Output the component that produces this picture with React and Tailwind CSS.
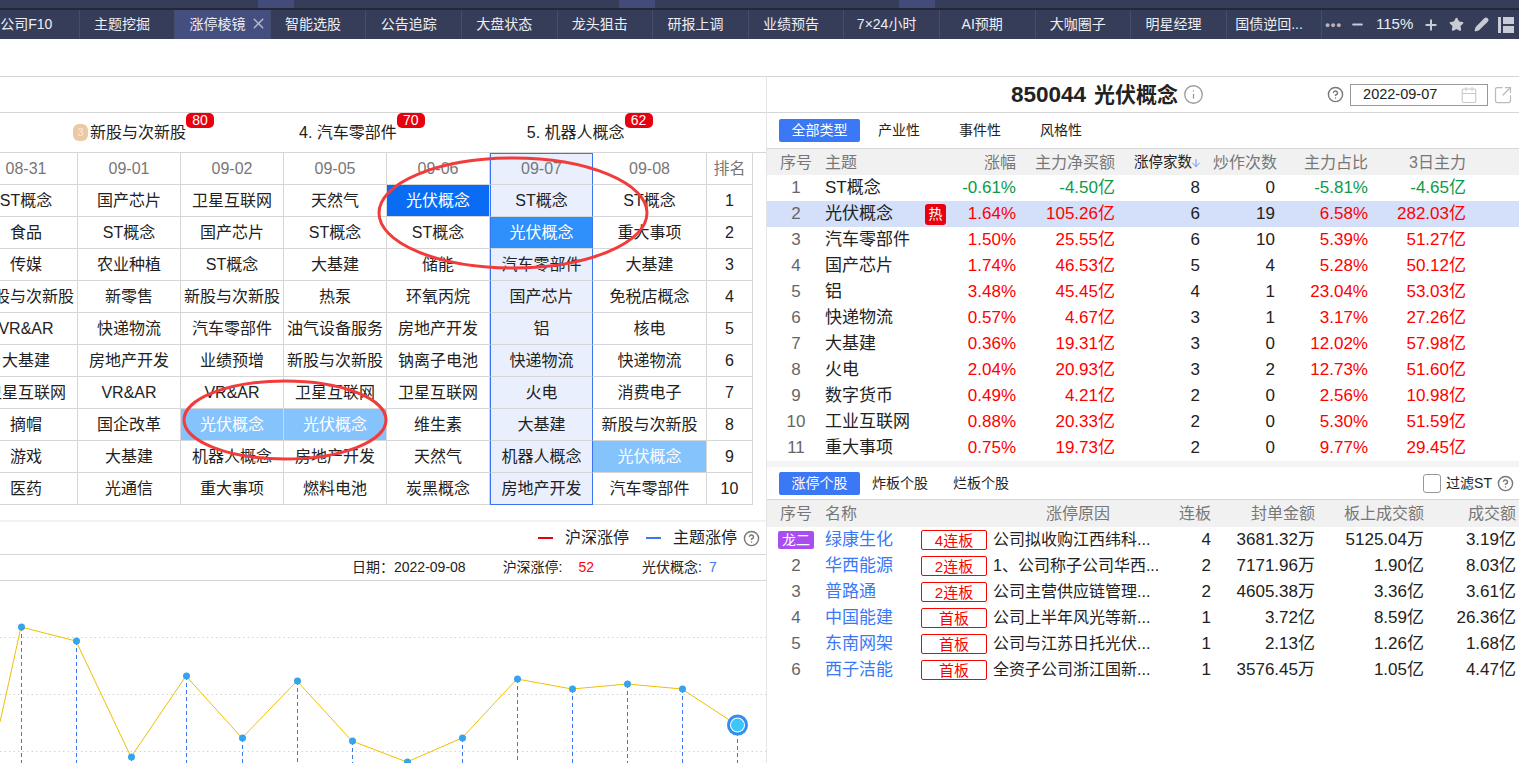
import React from 'react';
import { CircleHelp, Info, Calendar, Minus, Plus, Star, Pencil, ArrowDown, SquareArrowOutUpRight, X } from 'lucide-react';

const tabs = ['公司F10', '主题挖掘', '涨停棱镜', '智能选股', '公告追踪', '大盘状态', '龙头狙击', '研报上调', '业绩预告', '7×24小时', 'AI预期', '大咖圈子', '明星经理', '国债逆回...'];

const dates = ['08-31', '09-01', '09-02', '09-05', '09-06', '09-07', '09-08', '排名'];

const rank = [
  ['ST概念', '国产芯片', '卫星互联网', '天然气', '光伏概念', 'ST概念', 'ST概念'],
  ['食品', 'ST概念', '国产芯片', 'ST概念', 'ST概念', '光伏概念', '重大事项'],
  ['传媒', '农业种植', 'ST概念', '大基建', '储能', '汽车零部件', '大基建'],
  ['新股与次新股', '新零售', '新股与次新股', '热泵', '环氧丙烷', '国产芯片', '免税店概念'],
  ['VR&AR', '快递物流', '汽车零部件', '油气设备服务', '房地产开发', '铝', '核电'],
  ['大基建', '房地产开发', '业绩预增', '新股与次新股', '钠离子电池', '快递物流', '快递物流'],
  ['卫星互联网', 'VR&AR', 'VR&AR', '卫星互联网', '卫星互联网', '火电', '消费电子'],
  ['摘帽', '国企改革', '光伏概念', '光伏概念', '维生素', '大基建', '新股与次新股'],
  ['游戏', '大基建', '机器人概念', '房地产开发', '天然气', '机器人概念', '光伏概念'],
  ['医药', '光通信', '重大事项', '燃料电池', '炭黑概念', '房地产开发', '汽车零部件'],
];

const themes = [
  ['ST概念', '-0.61%', '-4.50亿', 8, 0, '-5.81%', '-4.65亿'],
  ['光伏概念', '1.64%', '105.26亿', 6, 19, '6.58%', '282.03亿'],
  ['汽车零部件', '1.50%', '25.55亿', 6, 10, '5.39%', '51.27亿'],
  ['国产芯片', '1.74%', '46.53亿', 5, 4, '5.28%', '50.12亿'],
  ['铝', '3.48%', '45.45亿', 4, 1, '23.04%', '53.03亿'],
  ['快递物流', '0.57%', '4.67亿', 3, 1, '3.17%', '27.26亿'],
  ['大基建', '0.36%', '19.31亿', 3, 0, '12.02%', '57.98亿'],
  ['火电', '2.04%', '20.93亿', 3, 2, '12.73%', '51.60亿'],
  ['数字货币', '0.49%', '4.21亿', 2, 0, '2.56%', '10.98亿'],
  ['工业互联网', '0.88%', '20.33亿', 2, 0, '5.30%', '51.59亿'],
  ['重大事项', '0.75%', '19.73亿', 2, 0, '9.77%', '29.45亿'],
];

const stocks = [
  ['绿康生化', '4连板', '公司拟收购江西纬科...', 4, '3681.32万', '5125.04万', '3.19亿'],
  ['华西能源', '2连板', '1、公司称子公司华西...', 2, '7171.96万', '1.90亿', '8.03亿'],
  ['普路通', '2连板', '公司主营供应链管理...', 2, '4605.38万', '3.36亿', '3.61亿'],
  ['中国能建', '首板', '公司上半年风光等新...', 1, '3.72亿', '8.59亿', '26.36亿'],
  ['东南网架', '首板', '公司与江苏日托光伏...', 1, '2.13亿', '1.26亿', '1.68亿'],
  ['西子洁能', '首板', '全资子公司浙江国新...', 1, '3576.45万', '1.05亿', '4.47亿'],
];

const points = [[21, 47], [76, 61], [131, 177], [186, 96], [242, 158], [297, 101], [352, 161], [407, 182], [462, 158], [517, 99], [572, 109], [627, 104], [682, 109]];

const themeCols = 'grid grid-cols-[58px_121px_70px_99px_85px_75px_93px_98px]';
const stockCols = 'grid grid-cols-[58px_96px_72px_168px_50px_104px_109px_92px]';

// 每个单元格的底色：选中列、当日光伏概念
const cellClass = (text, col) => {
  if (text !== '光伏概念') return col === 5 ? 'bg-[#e9effd] text-[#222]' : 'text-[#222]';
  if (col === 4) return 'bg-[#0a6cf5] text-white';
  if (col === 5) return 'bg-[#2f8ffb] text-white';
  return 'bg-[#85c3fd] text-white';
};

const Badge = ({ value }) => (
  <span className="absolute left-full top-[-8px] h-[15px] w-[28px] rounded-[5px] bg-[#e8000f] text-center text-[14px] leading-[15px] text-white">{value}</span>
);

const LayoutIcon = () => (
  <svg width="16" height="18" viewBox="0 0 16 18" fill="#c9cbd6">
    <rect x="0" y="1" width="3" height="16" />
    <rect x="5" y="1" width="11" height="7" />
    <rect x="5" y="10" width="11" height="7" />
  </svg>
);

const TopBar = () => (
  <div className="bg-[#363d59]">
    <div className="flex h-[8px]">
      <div className="ml-[258px] w-[36px] bg-[#434c78]" />
      <div className="ml-[325px] w-[36px] bg-[#434c78]" />
      <div className="ml-[244px] w-[36px] bg-[#434c78]" />
    </div>
    <div className="h-[2px] bg-[#232738]" />
    <div className="flex h-[29px] items-center text-[14px] text-[#eceef5]">
      <div className="ml-[-16px] flex h-full">
        {tabs.map((tab, i) => (
          <div key={tab} className={`relative flex h-full w-[95.6px] shrink-0 items-center justify-center border-r border-[#454d6e] pr-[10px] ${i === 2 ? 'bg-[#444f80]' : ''}`}>
            <span>{tab}</span>
            {i === 2 && <X size={17} className="absolute right-[3px] top-[5px] text-[#b5bad0]" />}
          </div>
        ))}
      </div>
      <div className="flex items-center pl-[3px]">
        <span className="text-[13px] font-bold tracking-[1px] text-[#b4b7c4]">•••</span>
        <Minus size={15} strokeWidth={3} className="ml-[8px] text-[#c9cbd6]" />
        <span className="ml-[11px] text-[15px]">115%</span>
        <Plus size={16} strokeWidth={3} className="ml-[10px] text-[#c9cbd6]" />
        <Star size={15} fill="#c9cbd6" className="ml-[10px] text-[#c9cbd6]" />
        <Pencil size={15} fill="#c9cbd6" className="ml-[10px] text-[#c9cbd6]" />
        <span className="ml-[9px]"><LayoutIcon /></span>
      </div>
    </div>
  </div>
);

const Podium = () => (
  <div className="flex h-[41px] items-center border-y border-[#d6d6d6] pl-[73px] text-[16px] text-[#222]">
    <span className="mr-[2px] flex h-[17px] w-[15px] items-center justify-center rounded-[6px] bg-[#ebc9a4] text-[11px] leading-none text-[#f8ecdf]">3</span>
    <span className="relative">新股与次新股<Badge value="80" /></span>
    <span className="relative ml-[113px]">4. 汽车零部件<Badge value="70" /></span>
    <span className="relative ml-[130px]">5. 机器人概念<Badge value="62" /></span>
  </div>
);

const RankTable = () => (
  <div className="ml-[-25px] grid w-[778px] grid-cols-[103px_103px_103px_103px_103px_103px_114px_46px] text-center text-[16px] leading-[31px]">
    {dates.map((d, i) => (
      <div key={d} className={`h-[32px] border-b border-r ${i === 5 ? 'border-x border-t border-x-[#3b74f0] border-t-[#3b74f0] border-b-[#d6d6d6] bg-[#e9effd] leading-[29px]' : 'border-[#d6d6d6]'} text-[#777]`}>{d}</div>
    ))}
    {rank.map((row, r) => (
      <React.Fragment key={r}>
        {row.map((text, c) => (
          <div key={c} className={`h-[32px] whitespace-nowrap border-b border-r border-[#d6d6d6] ${c === 5 ? 'border-x border-x-[#3b74f0]' : ''} ${c === 5 && r === 9 ? 'border-b-[#3b74f0]' : ''} ${cellClass(text, c)}`}>{text}</div>
        ))}
        <div className="h-[32px] border-b border-r border-[#d6d6d6] text-[#222]">{r + 1}</div>
      </React.Fragment>
    ))}
  </div>
);

const Chart = () => (
  <svg width="766" height="182" viewBox="0 1 766 182" className="block">
    {[57, 114, 171].map((y) => (
      <line key={y} x1="0" x2="766" y1={y + 0.5} y2={y + 0.5} stroke="#d4d4d4" strokeDasharray="1.5 3" />
    ))}
    {[...points, [737, 145]].map(([x, y]) => (
      <line key={x} x1={x + 0.5} x2={x + 0.5} y1={y} y2="183" stroke="#3b78f0" strokeDasharray="4 3" />
    ))}
    <polyline points={`0,142 ${points.map((p) => p.join(',')).join(' ')} 737,145`} fill="none" stroke="#f0c000" strokeWidth="1" />
    {points.map(([x, y]) => (
      <circle key={x} cx={x + 0.5} cy={y} r="3.5" fill="#36a3ee" />
    ))}
    <circle cx="737.5" cy="145" r="10.5" fill="#2f8ff0" />
    <circle cx="737.5" cy="145" r="7.5" fill="#fff" />
    <circle cx="737.5" cy="145" r="6.5" fill="#3cc4fb" />
  </svg>
);

const LeftPanel = () => (
  <div className="w-[767px] shrink-0 overflow-hidden border-r border-[#e4e4e4]">
    <div className="h-[35px]" />
    <Podium />
    <RankTable />
    <div className="h-[17px] border-b-2 border-[#f2f2f2]" />
    <div className="flex h-[33px] items-center justify-end border-b border-[#d6d6d6] pr-[6px] text-[16px] text-[#222]">
      <span className="h-[2px] w-[15px] bg-[#e8000f]" />
      <span className="ml-[12px]">沪深涨停</span>
      <span className="ml-[17px] h-[2px] w-[15px] bg-[#3b78f0]" />
      <span className="ml-[12px]">主题涨停</span>
      <CircleHelp size={17} className="ml-[6px] text-[#777]" />
    </div>
    <div className="flex h-[26px] items-center border-b border-[#d6d6d6] pl-[352px] text-[14px] text-[#222]">
      <span>日期：2022-09-08</span>
      <span className="ml-[37px]">沪深涨停:</span>
      <span className="ml-[16px] text-[#f00]">52</span>
      <span className="ml-[48px]">光伏概念:</span>
      <span className="ml-[7px] text-[#3b78f0]">7</span>
    </div>
    <Chart />
  </div>
);

const TabRow = ({ items, first, rest }) => (
  <div className={`flex items-center ${rest} text-[14px] text-[#222]`}>
    {items.map((t, i) => (
      <span key={t} className={i === 0 ? `${first} flex h-[23px] w-[81px] items-center justify-center rounded-[2px] bg-[#3b78f5] text-white` : ''}>{t}</span>
    ))}
  </div>
);

const ThemeTable = () => (
  <div className="text-[17px]">
    <div className={`${themeCols} h-[26px] items-center bg-[#f1f1f1] pt-[2px] text-[16px] text-[#777]`}>
      <span className="text-center">序号</span>
      <span>主题</span>
      <span className="text-right">涨幅</span>
      <span className="text-right">主力净买额</span>
      <span className="flex items-center justify-end text-[14.5px] text-[#222]">涨停家数<ArrowDown size={12} strokeWidth={1.5} className="-mx-[2px] text-[#3b78f5]" /></span>
      <span className="-mr-[2px] text-right">炒作次数</span>
      <span className="text-right">主力占比</span>
      <span className="text-right">3日主力</span>
    </div>
    {themes.map((row, i) => {
      const color = row[1].startsWith('-') ? 'text-[#0b9a48]' : 'text-[#f00]';
      return (
        <div key={row[0]} className={`${themeCols} h-[26px] items-center ${i === 1 ? 'bg-[#d4dffa]' : ''}`}>
          <span className="text-center text-[#666]">{i + 1}</span>
          <span className="flex items-center justify-between text-[#222]">
            {row[0]}
            {i === 1 && <span className="h-[21px] w-[21px] rounded-[3px] bg-[#e8000f] text-center text-[14px] leading-[21px] text-white">热</span>}
          </span>
          <span className={`text-right ${color}`}>{row[1]}</span>
          <span className={`text-right ${color}`}>{row[2]}</span>
          <span className="text-right text-[#222]">{row[3]}</span>
          <span className="text-right text-[#222]">{row[4]}</span>
          <span className={`text-right ${color}`}>{row[5]}</span>
          <span className={`text-right ${color}`}>{row[6]}</span>
        </div>
      );
    })}
  </div>
);

const StockTable = () => (
  <div className="text-[17px]">
    <div className={`${stockCols} h-[27px] items-center bg-[#f1f1f1] text-[16px] text-[#777]`}>
      <span className="text-center">序号</span>
      <span>名称</span>
      <span />
      <span className="pl-[53px]">涨停原因</span>
      <span className="text-right">连板</span>
      <span className="text-right">封单金额</span>
      <span className="text-right">板上成交额</span>
      <span className="text-right">成交额</span>
    </div>
    {stocks.map((row, i) => (
      <div key={row[0]} className={`${stockCols} h-[26px] items-center`}>
        <span className="flex justify-center text-[#666]">
          {i === 0 ? <span className="h-[18px] w-[36px] rounded-[2px] bg-[#a94df0] text-center text-[14px] leading-[18px] text-white">龙二</span> : i + 1}
        </span>
        <span className="text-[#3b78f5]">{row[0]}</span>
        <span className="flex h-[20px] w-[66px] items-center justify-center rounded-[2px] border border-[#f00] pt-[2px] text-[15px] text-[#f00]">{row[1]}</span>
        <span className="whitespace-nowrap text-[16px] text-[#222]">{row[2]}</span>
        <span className="text-right text-[#222]">{row[3]}</span>
        <span className="text-right text-[#222]">{row[4]}</span>
        <span className="text-right text-[#222]">{row[5]}</span>
        <span className="text-right text-[#222]">{row[6]}</span>
      </div>
    ))}
  </div>
);

const RightPanel = () => (
  <div className="min-w-0 flex-1">
    <div className="relative flex h-[36px] items-center border-b border-[#d6d6d6]">
      <div className="ml-[244px] flex items-center font-bold text-[#222]">
        <span className="text-[22.5px]">850044</span>
        <span className="ml-[8px] text-[21px]">光伏概念</span>
        <Info size={21} strokeWidth={1.5} className="ml-[5px] text-[#999]" />
      </div>
      <CircleHelp size={17} className="ml-[123px] text-[#777]" />
      <div className="ml-[6px] flex h-[22px] w-[138px] items-center justify-between border border-[#999] pl-[12px] pr-[9px] text-[14.5px] text-[#222]">
        2022-09-07
        <Calendar size={18} strokeWidth={1.5} className="text-[#c9c9c9]" />
      </div>
      <SquareArrowOutUpRight size={20} strokeWidth={1.5} className="ml-[5px] text-[#bbb]" />
    </div>
    <div className="flex h-[36px] items-center border-b border-[#d6d6d6] pl-[12px]">
      <TabRow items={['全部类型', '产业性', '事件性', '风格性']} first="mr-[-21px]" rest="gap-[39px]" />
    </div>
    <ThemeTable />
    <div className="h-[6px] bg-[#f4f4f4]" />
    <div className="flex h-[33px] items-center border-b border-[#d6d6d6] pl-[12px]">
      <TabRow items={['涨停个股', '炸板个股', '烂板个股']} first="mr-[-13px]" rest="gap-[25px]" />
      <div className="ml-auto flex items-center pr-[5px] text-[14px] text-[#222]">
        <span className="h-[19px] w-[18px] rounded-[3px] border border-[#999]" />
        <span className="ml-[5px]">过滤ST</span>
        <CircleHelp size={17} className="ml-[5px] text-[#777]" />
      </div>
    </div>
    <StockTable />
  </div>
);

export default function App() {
  return (
    <div className="relative h-[763px] w-[1519px] overflow-hidden bg-white [font-family:'Liberation_Sans','Noto_Sans_CJK_SC',sans-serif]">
      <TopBar />
      <div className="h-[38px] border-b border-[#d6d6d6]" />
      <div className="flex">
        <LeftPanel />
        <RightPanel />
      </div>
      {/* 截图上手画的红圈 */}
      <svg width="1519" height="763" className="pointer-events-none absolute left-0 top-0">
        <ellipse cx="513" cy="213" rx="134" ry="55" fill="none" stroke="#f23c3c" strokeWidth="3" />
        <ellipse cx="285" cy="420" rx="101" ry="39" fill="none" stroke="#f23c3c" strokeWidth="3" />
      </svg>
    </div>
  );
}
